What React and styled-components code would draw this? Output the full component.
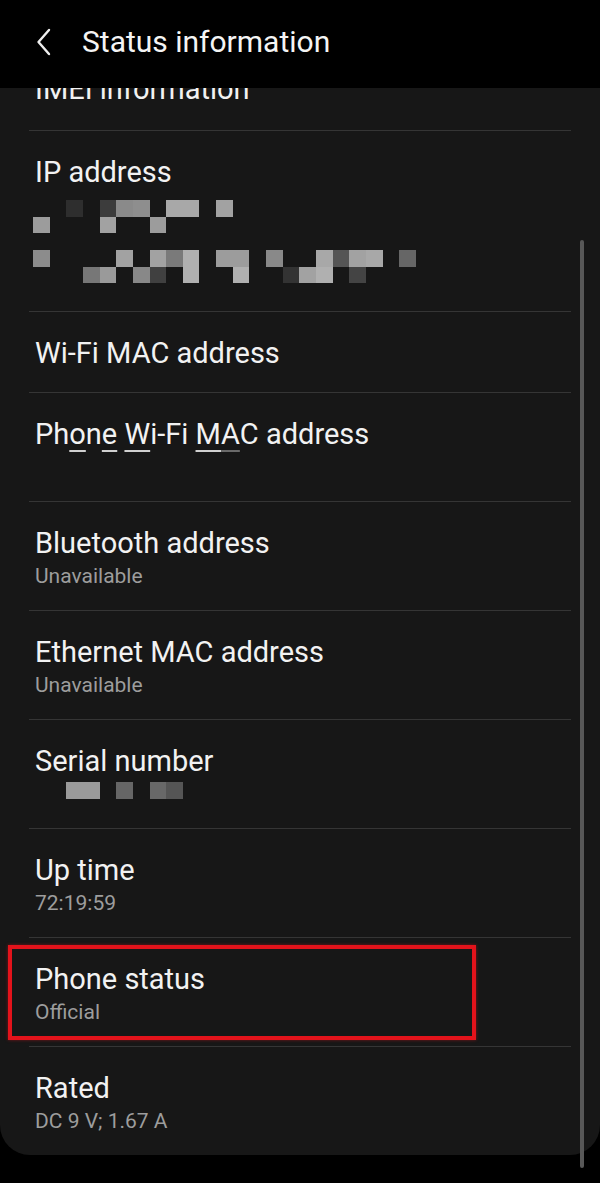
import React from 'react';
import styled, { createGlobalStyle } from 'styled-components';

const GlobalStyle = createGlobalStyle`
  body {
    margin: 0;
    background: #000;
    font-family: Roboto, "Noto Sans", sans-serif;
  }
`;

const Page = styled.div`
  position: relative;
  width: 600px;
  height: 1183px;
  overflow: hidden;
  background: #000;
`;

const Header = styled.div`
  height: 88px;
  box-sizing: border-box;
  padding: 0 0 4px 36px;
  display: flex;
  align-items: center;
  gap: 30px;
`;

const Title = styled.h1`
  margin: 0;
  font-size: 30px;
  font-weight: 400;
  color: #f4f4f4;
  line-height: 36px;
`;

const Viewport = styled.div`
  height: 1095px;
  overflow: hidden;
`;

const Card = styled.div`
  margin-top: 5px;
  padding: 0 29px;
  background: #171717;
  border-radius: 30px;
`;

const Row = styled.div`
  position: relative;
  padding: 24px 6px ${({ $bottom }) => $bottom ?? 22}px;
  border-top: 1px solid #353535;

  &:first-child {
    border-top: none;
    margin-top: -43px;
    padding-top: 22px;
    padding-bottom: 24px;
  }
`;

const RowTitle = styled.div`
  font-size: 29px;
  line-height: 34px;
  color: #f2f2f2;
  white-space: nowrap;
`;

const Sub = styled.div`
  margin-top: 4px;
  height: 24px;
  font-size: 21px;
  line-height: 24px;
  color: #9d9d9d;
`;

const Marked = styled.span`
  text-decoration: underline;
  text-decoration-thickness: 2px;
  text-underline-offset: 6px;
  text-decoration-color: ${({ $faint }) => ($faint ? '#6a6a6a' : '#d0d0d0')};
`;

const Mosaic = styled.svg`
  display: block;
  margin: ${({ $top }) => $top}px 0 0 -2px;
`;

const Highlight = styled.div`
  position: absolute;
  top: 7px;
  left: -21px;
  width: 468px;
  height: 95px;
  box-sizing: border-box;
  border: 4px solid #e3131b;
  box-shadow: 0 0 3px rgba(227, 19, 27, 0.5);
  pointer-events: none;
`;

const Scrollbar = styled.div`
  position: absolute;
  left: 580px;
  top: 240px;
  width: 4px;
  height: 928px;
  border-radius: 2px;
  background: #585858;
`;

const CELL = 16.65;

// censored blocks: [row, col, colour]
const ipCells = [
  [0, 2, '#2e2e2e'], [0, 4, '#3c3c3c'], [0, 5, '#8a8a8a'], [0, 6, '#8e8e8e'],
  [0, 8, '#a8a8a8'], [0, 9, '#a8a8a8'], [0, 11, '#a2a2a2'],
  [1, 0, '#9c9c9c'], [1, 4, '#a2a2a2'], [1, 7, '#9c9c9c'],
  [3, 0, '#8c8c8c'], [3, 5, '#a2a2a2'], [3, 7, '#a2a2a2'], [3, 8, '#7a7a7a'],
  [3, 9, '#b0b0b0'], [3, 11, '#9c9c9c'], [3, 12, '#9c9c9c'], [3, 14, '#898989'],
  [3, 17, '#a8a8a8'], [3, 18, '#555555'], [3, 19, '#a2a2a2'], [3, 20, '#a8a8a8'],
  [3, 22, '#666666'],
  [4, 3, '#777777'], [4, 4, '#9a9a9a'], [4, 6, '#888888'], [4, 7, '#404040'],
  [4, 9, '#b0b0b0'], [4, 12, '#b0b0b0'], [4, 15, '#333333'], [4, 16, '#a2a2a2'],
  [4, 17, '#b0b0b0'], [4, 19, '#444444'],
];

const serialCells = [
  [0, 2, '#9a9a9a'], [0, 3, '#9a9a9a'], [0, 5, '#666666'], [0, 7, '#686868'], [0, 8, '#555555'],
];

const Pixels = ({ cells, cols, rows, top }) => (
  <Mosaic
    $top={top}
    width={cols * CELL}
    height={rows * CELL}
    viewBox={`0 0 ${cols} ${rows}`}
    shapeRendering="crispEdges"
  >
    {cells.map(([r, c, fill]) => (
      <rect key={`${r}-${c}`} x={c} y={r} width="1" height="1" fill={fill} />
    ))}
  </Mosaic>
);

const BackIcon = () => (
  <svg width="16" height="28" viewBox="0 0 16 28">
    <path d="M13 2 L2.5 14 L13 26" fill="none" stroke="#eeeeee" strokeWidth="2.4" strokeLinecap="round" strokeLinejoin="round" />
  </svg>
);

const items = [
  { title: 'Bluetooth address', sub: 'Unavailable' },
  { title: 'Ethernet MAC address', sub: 'Unavailable' },
];

const App = () => (
  <Page>
    <GlobalStyle />
    <Header>
      <BackIcon />
      <Title>Status information</Title>
    </Header>
    <Viewport>
      <Card>
        <Row>
          <RowTitle>IMEI information</RowTitle>
        </Row>
        <Row $bottom={28}>
          <RowTitle>IP address</RowTitle>
          <Pixels cells={ipCells} cols={23} rows={5} top={11} />
        </Row>
        <Row>
          <RowTitle>Wi-Fi MAC address</RowTitle>
        </Row>
        <Row>
          <RowTitle>
            Ph<Marked>o</Marked>n<Marked>e</Marked> <Marked>W</Marked>i-Fi <Marked>M</Marked>
            <Marked $faint>A</Marked>C address
          </RowTitle>
          <Sub />
        </Row>
        {items.map((item) => (
          <Row key={item.title}>
            <RowTitle>{item.title}</RowTitle>
            <Sub>{item.sub}</Sub>
          </Row>
        ))}
        <Row>
          <RowTitle>Serial number</RowTitle>
          <Sub>
            <Pixels cells={serialCells} cols={9} rows={1} top={1} />
          </Sub>
        </Row>
        <Row>
          <RowTitle>Up time</RowTitle>
          <Sub>72:19:59</Sub>
        </Row>
        <Row>
          <Highlight />
          <RowTitle>Phone status</RowTitle>
          <Sub>Official</Sub>
        </Row>
        <Row>
          <RowTitle>Rated</RowTitle>
          <Sub>DC 9 V; 1.67 A</Sub>
        </Row>
      </Card>
    </Viewport>
    <Scrollbar />
  </Page>
);

export default App;
